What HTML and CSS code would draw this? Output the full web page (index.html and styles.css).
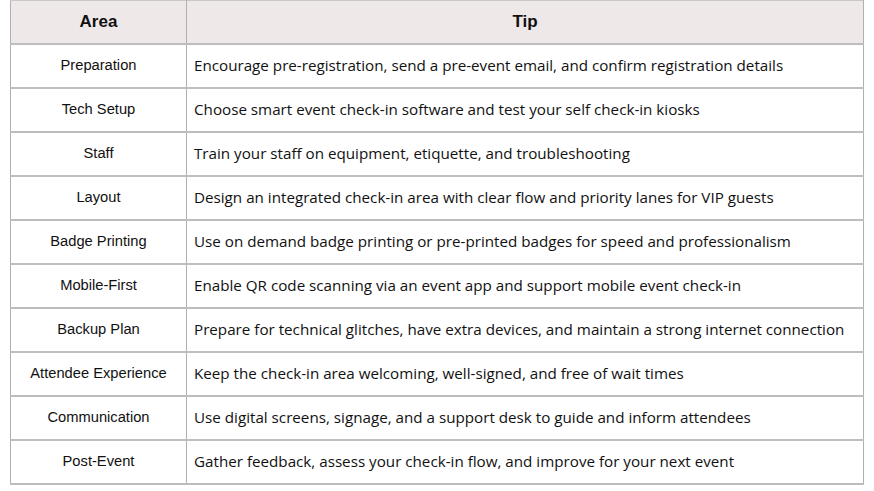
FILE: index.html
```html
<!DOCTYPE html>
<html>
<head>
<meta charset="utf-8">
<link rel="stylesheet" href="styles.css">
</head>
<body>
<table class="tips">
  <thead>
    <tr><th class="area">Area</th><th class="tip">Tip</th></tr>
  </thead>
  <tbody>
    <tr><td class="area">Preparation</td><td class="tip">Encourage pre-registration, send a pre-event email, and confirm registration details</td></tr>
    <tr><td class="area">Tech Setup</td><td class="tip">Choose smart event check-in software and test your self check-in kiosks</td></tr>
    <tr><td class="area">Staff</td><td class="tip">Train your staff on equipment, etiquette, and troubleshooting</td></tr>
    <tr><td class="area">Layout</td><td class="tip">Design an integrated check-in area with clear flow and priority lanes for VIP guests</td></tr>
    <tr><td class="area">Badge Printing</td><td class="tip">Use on demand badge printing or pre-printed badges for speed and professionalism</td></tr>
    <tr><td class="area">Mobile-First</td><td class="tip">Enable QR code scanning via an event app and support mobile event check-in</td></tr>
    <tr><td class="area">Backup Plan</td><td class="tip">Prepare for technical glitches, have extra devices, and maintain a strong internet connection</td></tr>
    <tr><td class="area">Attendee Experience</td><td class="tip">Keep the check-in area welcoming, well-signed, and free of wait times</td></tr>
    <tr><td class="area">Communication</td><td class="tip">Use digital screens, signage, and a support desk to guide and inform attendees</td></tr>
    <tr><td class="area">Post-Event</td><td class="tip">Gather feedback, assess your check-in flow, and improve for your next event</td></tr>
  </tbody>
</table>
</body>
</html>
```
FILE: styles.css
```css
html, body {
  margin: 0;
  padding: 0;
  background: #ffffff;
}
body {
  padding: 0 10px 0 10px;
}
.tips {
  border-collapse: collapse;
  width: 854px;
  table-layout: fixed;
  color: #111;
}
.tips th, .tips td {
  height: 42px;
  padding: 0;
  border-top: 2px solid #bdbdbd;
  border-bottom: 2px solid #bdbdbd;
  border-left: 1px solid #b0b0b0;
  border-right: 1px solid #b0b0b0;
  vertical-align: middle;
}
.tips th {
  background: #efe8e8;
  font-family: "Liberation Sans", Arial, sans-serif;
  font-weight: bold;
  font-size: 17px;
  text-align: center;
  border-top: 1px solid #c8c8c8;
}
.tips th.area { width: 175px; }
.tips td.area {
  font-family: "Liberation Sans", Arial, sans-serif;
  font-size: 14.7px;
  text-align: center;
  height: 40px;
  padding-bottom: 2px;
}
.tips td.tip {
  font-family: "Open Sans", "Noto Sans", sans-serif;
  font-size: 15.2px;
  text-align: left;
  padding-left: 7px;
  height: 40px;
  padding-bottom: 2px;
}
```
